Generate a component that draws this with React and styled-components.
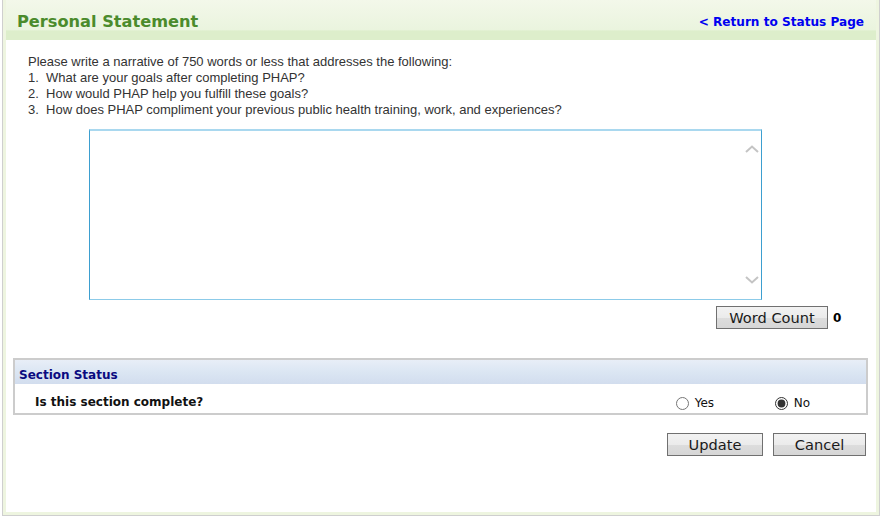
import styled, { createGlobalStyle } from 'styled-components'

const Global = createGlobalStyle`
    body{
        margin: 0;
        background: #fff;
        font-family: "Liberation Sans", Arial, sans-serif;
    }
`

export default function App(){
    const questions = [
        "What are your goals after completing PHAP?",
        "How would PHAP help you fulfill these goals?",
        "How does PHAP compliment your previous public health training, work, and experiences?",
    ];

    return (
        <>
            <Global/>
            <Frame>
                <Panel>
                    <Header>
                        <h1>Personal Statement</h1>
                        <a href="#">&lt; Return to Status Page</a>
                    </Header>
                    <Body>
                        <Intro>
                            <p>Please write a narrative of 750 words or less that addresses the following:</p>
                            {questions.map((q, i) =>
                                <p key={i}>{i + 1}.&nbsp; {q}</p>
                            )}
                        </Intro>
                        <AreaWrap>
                            <textarea/>
                            <Chevron $top>
                                <svg width="14" height="8" viewBox="0 0 14 8"><path d="M1 7 L7 1.5 L13 7" fill="none" stroke="#c4c4c4" strokeWidth="2"/></svg>
                            </Chevron>
                            <Chevron>
                                <svg width="14" height="8" viewBox="0 0 14 8"><path d="M1 1 L7 6.5 L13 1" fill="none" stroke="#c4c4c4" strokeWidth="2"/></svg>
                            </Chevron>
                        </AreaWrap>
                        <CountRow>
                            <Button $w="112px">Word Count</Button>
                            <b>0</b>
                        </CountRow>
                        <Section>
                            <SectionHead>Section Status</SectionHead>
                            <SectionRow>
                                <span>Is this section complete?</span>
                                <Choices>
                                    <label><input type="radio" name="done"/>Yes</label>
                                    <label><input type="radio" name="done" defaultChecked/>No</label>
                                </Choices>
                            </SectionRow>
                        </Section>
                        <Actions>
                            <Button $w="96px">Update</Button>
                            <Button $w="93px">Cancel</Button>
                        </Actions>
                    </Body>
                </Panel>
            </Frame>
        </>
    )
}

const Frame = styled.div`
    margin-left: 2px;
    width: 878px;
    height: 516px;
    box-sizing: border-box;
    border: 1px solid #cfcfcf;
    border-top: none;
`
const Panel = styled.div`
    height: 100%;
    box-sizing: border-box;
    border: 3px solid #eef5e0;
    border-top: none;
    background: #fff;
`
const Header = styled.div`
    height: 40px;
    display: flex;
    align-items: center;
    justify-content: space-between;
    padding: 3px 12px 0 11px;
    box-sizing: border-box;
    background: linear-gradient(#f3f8ea 0%, #eaf4de 75%, #ddeecb 77%, #ddeecb 100%);
    h1{
        margin: 0;
        font-family: "DejaVu Sans", Verdana, sans-serif;
        font-size: 16.2px;
        font-weight: bold;
        color: #4b8b2c;
    }
    a{
        font-family: "DejaVu Sans", Verdana, sans-serif;
        font-size: 12.1px;
        font-weight: bold;
        color: #0000f0;
        text-decoration: none;
    }
`
const Body = styled.div`
    padding: 14px 0 0 0;
`
const Intro = styled.div`
    padding-left: 22px;
    color: #333;
    font-size: 13px;
    p{
        margin: 0;
        line-height: 16px;
    }
`
const AreaWrap = styled.div`
    position: relative;
    margin: 11px 0 0 83px;
    width: 673px;
    height: 171px;
    textarea{
        display: block;
        width: 100%;
        height: 100%;
        box-sizing: border-box;
        resize: none;
        overflow: hidden;
        border: 1px solid #3d9fd0;
        border-top: 2px solid #a9d8ef;
        border-bottom-color: #8ccbe9;
        outline: none;
    }
`
const Chevron = styled.span`
    position: absolute;
    right: 3px;
    ${p => p.$top ? 'top: 16px;' : 'bottom: 16px;'}
    line-height: 0;
`
const Button = styled.button`
    width: ${p => p.$w};
    height: 23px;
    padding: 0;
    font-family: "DejaVu Sans", "Segoe UI", sans-serif;
    font-size: 14.6px;
    color: #1a1a1a;
    background: linear-gradient(#f2f2f2 0%, #ebebeb 50%, #dddddd 51%, #d6d6d6 100%);
    border: 1px solid #707070;
    border-radius: 0;
`
const CountRow = styled.div`
    display: flex;
    justify-content: flex-end;
    align-items: center;
    gap: 5px;
    margin-top: 6px;
    padding-right: 35px;
    b{
        font-family: "DejaVu Sans", Verdana, sans-serif;
        font-size: 12px;
        color: #000;
        width: 8px;
    }
`
const Section = styled.div`
    margin: 29px 8px 0 7px;
    border: 2px solid #cccccc;
`
const SectionHead = styled.div`
    height: 24px;
    display: flex;
    align-items: center;
    padding: 5px 0 0 4px;
    box-sizing: border-box;
    font-family: "DejaVu Sans", Verdana, sans-serif;
    font-size: 12px;
    font-weight: bold;
    color: #0a0a80;
    background: linear-gradient(#e8eef7 0%, #dbe6f3 50%, #d2ddee 100%);
`
const SectionRow = styled.div`
    height: 29px;
    display: flex;
    align-items: center;
    justify-content: space-between;
    padding: 6px 0 0 20px;
    box-sizing: border-box;
    font-family: "DejaVu Sans", Verdana, sans-serif;
    font-size: 12px;
    span{
        font-weight: bold;
        color: #111;
    }
`
const Choices = styled.div`
    display: flex;
    padding: 3px 56px 0 0;
    label{
        display: flex;
        align-items: center;
        font-family: "DejaVu Sans", Tahoma, sans-serif;
        font-size: 12px;
        color: #111;
    }
    label:first-child{
        width: 99px;
    }
    input{
        margin: 0 6px 0 0;
        width: 13px;
        height: 13px;
        accent-color: #333;
    }
`
const Actions = styled.div`
    display: flex;
    justify-content: flex-end;
    gap: 10px;
    margin-top: 18px;
    padding-right: 10px;
`
